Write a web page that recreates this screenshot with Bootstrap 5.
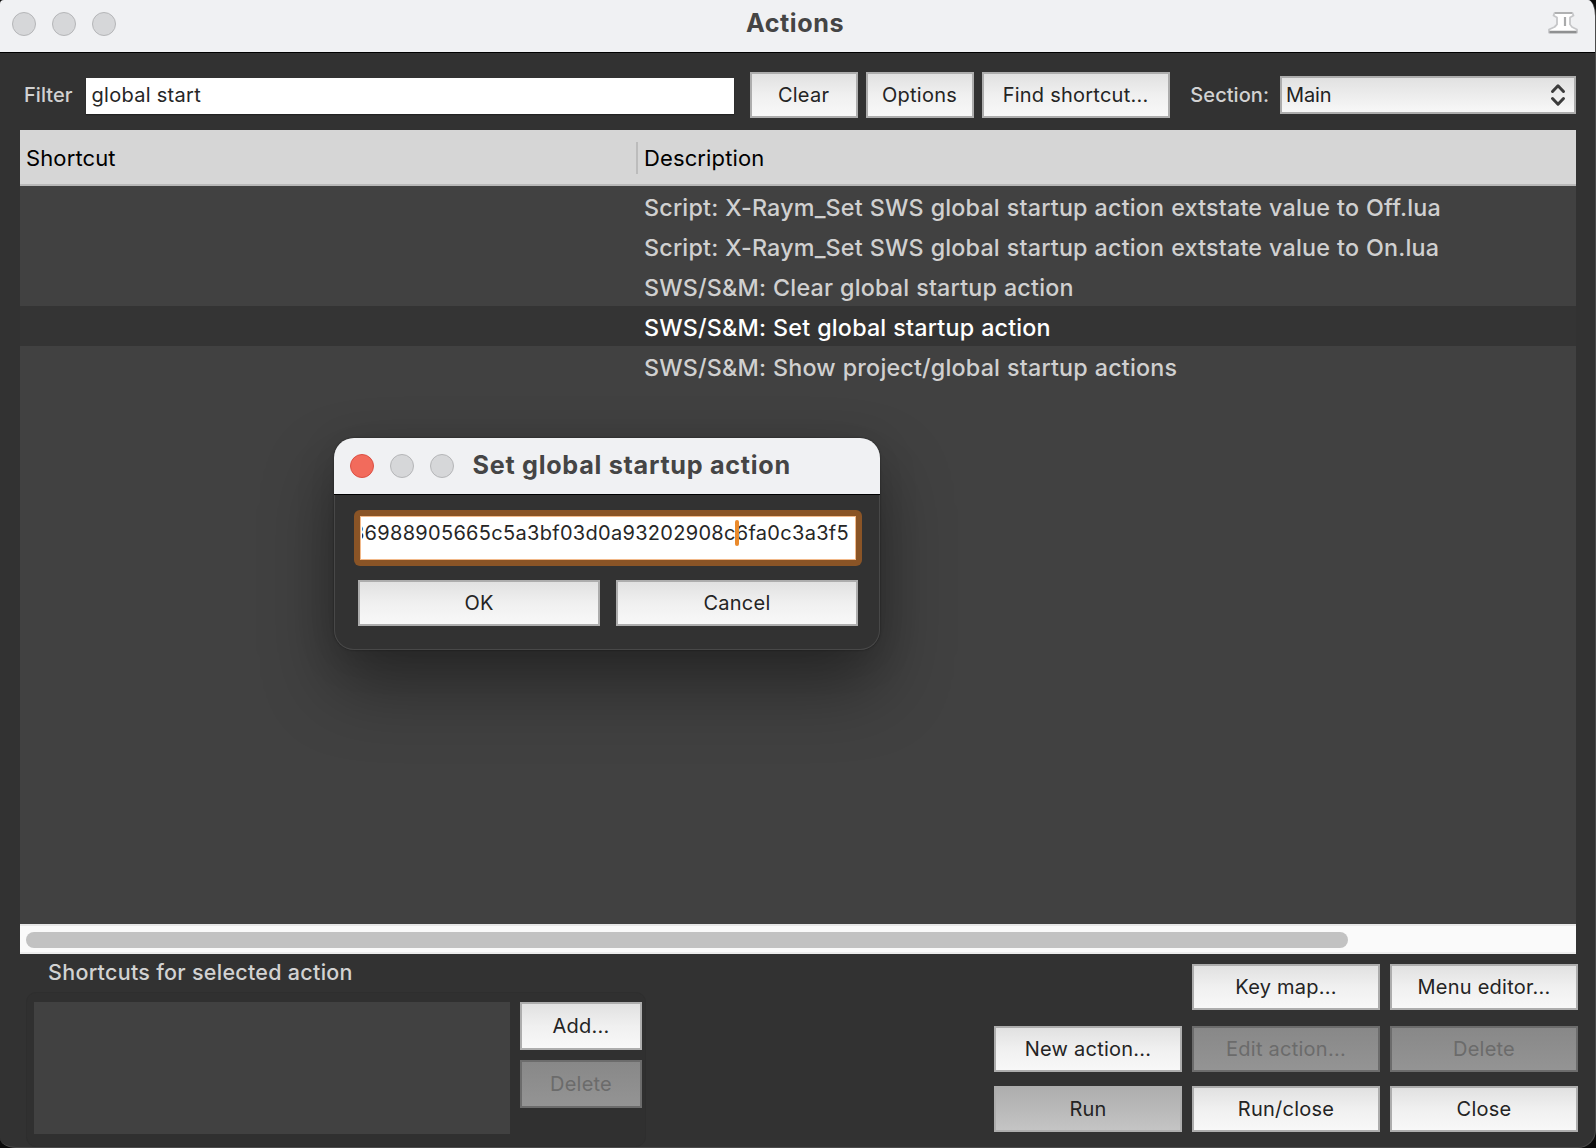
<!DOCTYPE html>
<html lang="en">
<head>
<meta charset="utf-8">
<meta name="viewport" content="width=device-width, initial-scale=1">
<title>Actions</title>
<link href="https://cdn.jsdelivr.net/npm/bootstrap@5.3.0/dist/css/bootstrap.min.css" rel="stylesheet">
<style>
  html, body { height: 100%; }
  body { background: #0c0c0c; font-family: Inter, Roboto, "Liberation Sans", sans-serif; font-size: 20px; line-height: 1.2; letter-spacing: .24px; color: #d2d2d2; overflow: hidden; }
  .app-window { width: 1596px; height: 1148px; background: #323232; border-radius: 4px 8px 18px 16px / 4px 16px 18px 10px; border-right: 1px solid #4b4b4b; border-bottom: 1px solid #4b4b4b; }
  .title-strip { background: #f0f1f3; border-bottom: 1px solid #000; color: #454545; }
  .app-title { height: 53px; padding: 0 17px 6px 12px; }
  .app-title .gap-dots { margin-top: 2px; }
  .app-title .title-text { margin-left: -74px; }
  .title-text { font-size: 25.2px; font-weight: 700; letter-spacing: .55px; line-height: 30px; }
  .dot { width: 24px; height: 24px; border-radius: 50%; background: #d6d7d9; border: 1px solid #b5b6b8; }
  .dot-red { background: #f26b5c; border-color: #dc5044; }
  .gap-dots { gap: 16px; }

  .toolbar-row { height: 77px; padding: 7px 19px 0 24px; }
  .lbl { font-weight: 500; letter-spacing: .05px; }
  .field { background: #fff; color: #262626; box-shadow: 0 1px 1px #222; }
  .filter-field { width: 648px; height: 36px; padding-left: 6px; margin: 2px 0 0 13px; line-height: 35px; letter-spacing: .28px; }
  .section-field { width: 296px; height: 38px; border: 2px solid #adadad; padding: 0 8px 0 4px; background: linear-gradient(#e1e1e1, #f8f8f8); color: #222; margin-left: 11px; letter-spacing: -.1px; }

  .btn-mac { --bs-btn-font-size: 20px; --bs-btn-line-height: 24px; --bs-btn-padding-x: 0; --bs-btn-padding-y: 0; --bs-btn-border-radius: 0;
    --bs-btn-color: #242424; --bs-btn-disabled-color: #6b6b6b; --bs-btn-disabled-opacity: 1; --bs-btn-disabled-border-color: #6c6c6c; --bs-btn-border-color: #adadad; --bs-btn-border-width: 2px;
    height: 46px; letter-spacing: .24px; background: linear-gradient(#e1e1e1, #f0f0f0 50%, #f8f8f8); }
  .btn-mac:disabled { background: linear-gradient(#888, #949494); }
  .btn-mac.pressed { background: linear-gradient(#aeaeae, #c4c4c4); }
  .w-108 { width: 108px; } .w-188 { width: 188px; } .w-122 { width: 122px; height: 48px; }

  .action-table { margin: 0 19px 0 20px; height: 824px; background: #414141; }
  .table-head { height: 56px; background: #d6d6d6; border-bottom: 2px solid #b8b8b8; color: #000; font-size: 22px; letter-spacing: .12px; padding-top: 2px; }
  .col-key { width: 616px; padding-left: 6px; }
  .col-sep { width: 2px; height: 32px; background: #bcbcbc; margin: 0 6px 0 0; }
  .action-row { height: 40px; padding: 8px 0 0 624px; font-size: 23.3px; line-height: 28px; font-weight: 500; letter-spacing: .19px; word-spacing: .5px; color: #d0d0d0; white-space: nowrap; }
  .action-row.chosen { background: #343434; color: #fff; }
  .scroll-track { height: 30px; background: #fafafa; border-top: 2px solid #e8e8e8; border-bottom: 2px solid #ededed; padding: 6px 6px 0; }
  .scroll-thumb { width: 1322px; height: 16px; border-radius: 8px; background: #c2c2c2; }

  .group-side { width: 620px; margin-left: 26px; }
  .group-label { font-size: 21.5px; font-weight: 500; letter-spacing: .28px; height: 38px; padding: 6px 0 0 22px; }
  .group-box { height: 155px; background: #303030; border: 1px solid #2e2e2e; border-radius: 10px; padding: 9px 3px 0 7px; gap: 10px; }
  .key-list { width: 476px; height: 132px; background: #414141; }
  .btn-stack { gap: 10px; }
  .cmd-area { margin-right: 17px; padding-top: 10px; }
  .cmd-row { gap: 10px; }
  .cmd-row-1 { margin-bottom: 16px; } .cmd-row-2 { margin-bottom: 14px; }

  /* floating prompt over the action list */
  .prompt-window { left: 334px; top: 438px; width: 546px; height: 212px; background: #323232; border-radius: 20px; box-shadow: inset 0 0 0 1px #484848, 0 0 2px rgba(0,0,0,.5), 0 36px 70px rgba(0,0,0,.38), 0 8px 40px rgba(0,0,0,.12); }
  .prompt-title { height: 57px; padding: 0 16px 1px; border-radius: 20px 20px 0 0; }
  .prompt-title .title-text { margin: -2px 0 0 18.5px; letter-spacing: .71px; }
  .focus-frame { width: 508px; height: 56px; margin: 15px 0 14px 20px; padding: 6px; background: #8a5426; border-radius: 6px; }
  .prompt-field { height: 44px; border: 1px solid #f2b98a; background: #fff; color: #262626; padding: 0 6px 0 1px; }
  .clip-text { height: 34px; line-height: 33px; letter-spacing: .3px; overflow: hidden; white-space: nowrap; }
  .caret-bar { width: 4px; height: 26px; border-radius: 2px; background: #ea8a2c; left: 374px; top: 3px; }
  .prompt-actions { padding: 0 22px 0 24px; gap: 16px; }
</style>
</head>
<body>
<div class="app-window position-relative d-flex flex-column overflow-hidden">
  <header class="title-strip app-title d-flex align-items-center justify-content-between">
    <div class="d-flex gap-dots"><span class="dot"></span><span class="dot"></span><span class="dot"></span></div>
    <div class="title-text">Actions</div>
    <svg width="30" height="26" viewBox="0 0 30 26">
      <path d="M6.500 3H24.500L25.500 5.500L22 7.500V14.500L24 17L29 19.500V22.500H1V19.500L6.500 17L9 14.500V7.500L5.500 5.500Z" fill="#fff" stroke="#c6c7c9" stroke-width="1.800" stroke-linejoin="round"/>
      <path d="M7 3H24" stroke="#b0b1b2" stroke-width="2"/>
      <path d="M10 6H21V15L24 19H7L10 15Z" fill="#fff"/>
      <path d="M1.500 22H28.500" stroke="#8f9091" stroke-width="2.600"/>
      <path d="M17 7V16" stroke="#a9aaab" stroke-width="2.200"/>
    </svg>
  </header>

  <div class="toolbar-row d-flex align-items-center">
    <label class="lbl">Filter</label>
    <div class="field filter-field">global start</div>
    <div class="d-flex gap-2 ms-3">
      <button class="btn btn-mac w-108">Clear</button>
      <button class="btn btn-mac w-108">Options</button>
      <button class="btn btn-mac w-188">Find shortcut...</button>
    </div>
    <label class="lbl ms-auto">Section:</label>
    <div class="section-field d-flex align-items-center justify-content-between">Main
      <svg width="16" height="24" viewBox="0 0 16 24" fill="none" stroke="#3c3c3c" stroke-width="3" stroke-linecap="round" stroke-linejoin="round"><path d="M2.500 8.500L8 2.800L13.500 8.500M2.500 15.500L8 21.200L13.500 15.500"/></svg>
    </div>
  </div>

  <main class="action-table d-flex flex-column">
    <div class="table-head d-flex align-items-center">
      <div class="col-key">Shortcut</div>
      <div class="col-sep"></div>
      <div>Description</div>
    </div>
    <div class="action-row">Script: X-Raym_Set SWS global startup action extstate value to Off.lua</div>
    <div class="action-row">Script: X-Raym_Set SWS global startup action extstate value to On.lua</div>
    <div class="action-row">SWS/S&amp;M: Clear global startup action</div>
    <div class="action-row chosen">SWS/S&amp;M: Set global startup action</div>
    <div class="action-row">SWS/S&amp;M: Show project/global startup actions</div>
    <div class="scroll-track mt-auto"><div class="scroll-thumb"></div></div>
  </main>

  <footer class="d-flex justify-content-between">
    <section class="group-side">
      <div class="group-label">Shortcuts for selected action</div>
      <div class="group-box d-flex">
        <div class="key-list"></div>
        <div class="btn-stack d-flex flex-column">
          <button class="btn btn-mac w-122">Add...</button>
          <button class="btn btn-mac w-122" disabled>Delete</button>
        </div>
      </div>
    </section>
    <section class="cmd-area">
      <div class="cmd-row cmd-row-1 d-flex justify-content-end">
        <button class="btn btn-mac w-188">Key map...</button>
        <button class="btn btn-mac w-188">Menu editor...</button>
      </div>
      <div class="cmd-row cmd-row-2 d-flex">
        <button class="btn btn-mac w-188">New action...</button>
        <button class="btn btn-mac w-188" disabled>Edit action...</button>
        <button class="btn btn-mac w-188" disabled>Delete</button>
      </div>
      <div class="cmd-row d-flex">
        <button class="btn btn-mac w-188 pressed">Run</button>
        <button class="btn btn-mac w-188">Run/close</button>
        <button class="btn btn-mac w-188">Close</button>
      </div>
    </section>
  </footer>

  <div class="prompt-window position-absolute">
    <div class="title-strip prompt-title d-flex align-items-center">
      <div class="d-flex gap-dots"><span class="dot dot-red"></span><span class="dot"></span><span class="dot"></span></div>
      <div class="title-text">Set global startup action</div>
    </div>
    <div class="focus-frame">
      <div class="prompt-field position-relative">
        <div class="clip-text d-flex justify-content-end"><span>36988905665c5a3bf03d0a93202908c6fa0c3a3f5</span></div>
        <span class="caret-bar position-absolute"></span>
      </div>
    </div>
    <div class="prompt-actions d-flex">
      <button class="btn btn-mac flex-fill w-50">OK</button>
      <button class="btn btn-mac flex-fill w-50">Cancel</button>
    </div>
  </div>
</div>
<script src="https://cdn.jsdelivr.net/npm/bootstrap@5.3.0/dist/js/bootstrap.bundle.min.js"></script>
</body>
</html>
